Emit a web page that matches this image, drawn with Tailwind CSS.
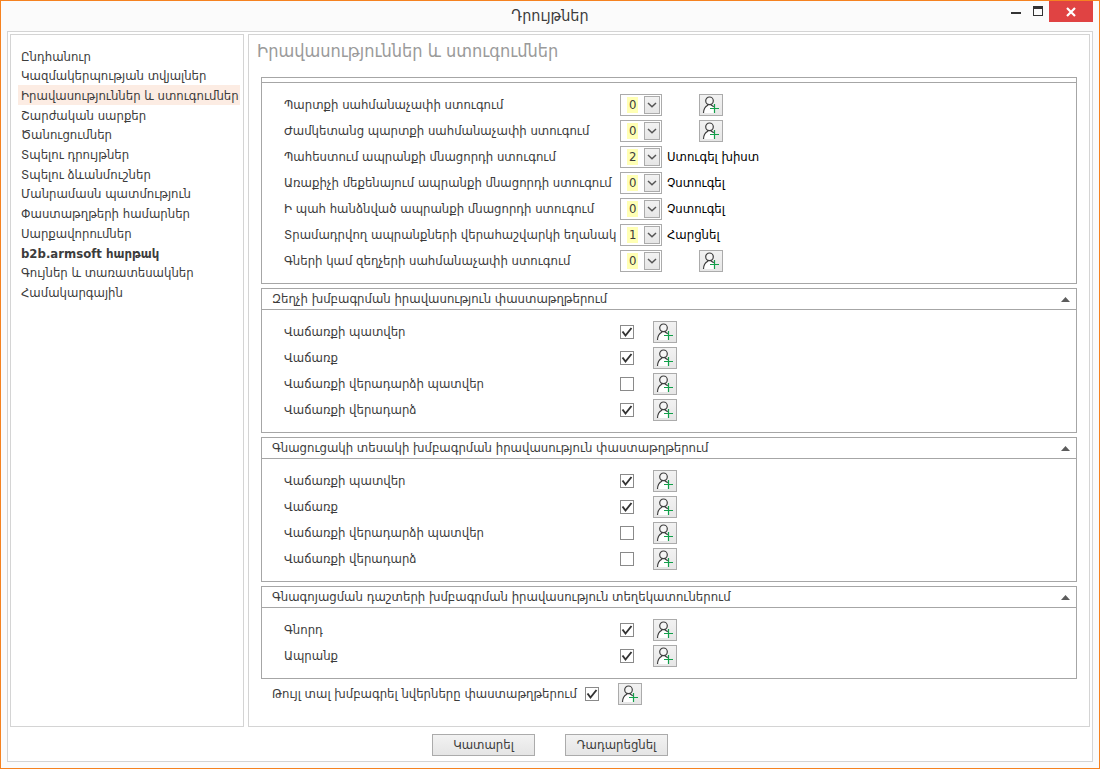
<!DOCTYPE html>
<html lang="hy">
<head>
<meta charset="utf-8">
<title>Դրույթներ</title>
<script src="https://cdn.jsdelivr.net/npm/@tailwindcss/browser@4"></script>
</head>
<body class="flex min-h-screen flex-col border border-[#f58220] bg-[#fbfbfb] px-1.5 pb-1.5 font-['DejaVu_Sans_Condensed','DejaVu_Sans',sans-serif] text-[13px] text-[#3c3c3c]">
<svg class="hidden">
  <symbol id="user-add" viewBox="0 0 18 18">
    <path d="M2 17C2 13 3.500 11 6 9.500L9.500 9.500 12 11V17z" fill="#fff"/>
    <g fill="#f6f6f6" stroke="#3f3f3f" stroke-width="1.200">
      <circle cx="7.500" cy="4.800" r="3.800"/>
      <path fill="none" d="M1.500 17C1.600 12.800 3 10.600 5.800 9.200L6 8.200M9 8.200L9.300 9.200C10.500 9.700 11.200 10.200 11.700 10.900"/>
    </g>
    <path d="M12.500 8v9M8 12.500h9" stroke="#12a04a" stroke-width="1.200" fill="none"/>
  </symbol>
</svg>
<header class="relative flex h-[30px] shrink-0 items-center justify-center">
  <h1 class="text-base">Դրույթներ</h1>
  <div class="absolute top-0 right-0 flex h-[21px]">
    <button aria-label="Minimize" class="flex w-[22px] justify-center pt-[11px]"><span class="h-0.5 w-2.5 bg-[#333]"></span></button>
    <button aria-label="Maximize" class="flex w-[22px] justify-center pt-[5px]"><span class="h-2.5 w-2.5 border border-t-3 border-[#333]"></span></button>
    <button aria-label="Close" class="flex w-11 items-center justify-center bg-[#e04343]">
      <svg class="size-2.5" viewBox="0 0 10 10"><path d="M1 1l8 8M9 1L1 9" stroke="#fff" stroke-width="2.200"/></svg>
    </button>
  </div>
</header>
<div class="flex grow flex-col border border-[#d4d4d4] bg-white px-0.5 pt-0.5">
  <div class="flex grow gap-1">
    <nav class="w-[234px] shrink-0 border border-[#d4d4d4] pt-[11px] pr-[3px] pl-[7px]">
      <ul id="menu" class="grid h-64 auto-rows-fr"></ul>
    </nav>
    <main class="grow border border-[#d4d4d4] px-3 pb-4">
      <h2 class="-ml-1 flex h-8 items-center text-lg text-[#9a9a9a]">Իրավասություններ և ստուգումներ</h2>
      <div id="groups" class="mt-2.5 space-y-1"></div>
      <div class="flex h-[30px] items-center pl-[11px]">
        <label for="gifts" class="whitespace-nowrap">Թույլ տալ խմբագրել նվերները փաստաթղթերում</label>
        <span class="relative ml-2 flex size-3.5">
          <input id="gifts" type="checkbox" checked class="peer size-3.5 appearance-none border border-[#8a8a8a] bg-white">
          <svg class="pointer-events-none absolute inset-0 hidden peer-checked:block" viewBox="0 0 14 14"><path d="M2.500 6.500l3 4 6-7.500" fill="none" stroke="#333" stroke-width="1.900"/></svg>
        </span>
        <button aria-label="Ավելացնել" class="ml-[19px] flex h-[22px] w-6 items-center justify-center border border-[#ababab] bg-linear-to-b from-[#f2f2f2] to-[#e6e6e6]"><svg class="size-[18px]"><use href="#user-add"/></svg></button>
      </div>
    </main>
  </div>
  <footer class="flex h-[34px] items-center justify-center gap-[30px] pt-0.5">
    <button class="h-[22px] w-[103px] border border-[#ababab] bg-linear-to-b from-[#f2f2f2] to-[#e5e5e5]">Կատարել</button>
    <button class="h-[22px] w-[103px] border border-[#ababab] bg-linear-to-b from-[#f2f2f2] to-[#e5e5e5]">Դադարեցնել</button>
  </footer>
</div>
<script>
const menu = ['Ընդհանուր','Կազմակերպության տվյալներ','Իրավասություններ և ստուգումներ','Շարժական սարքեր','Ծանուցումներ','Տպելու դրույթներ','Տպելու ձևանմուշներ','Մանրամասն պատմություն','Փաստաթղթերի համարներ','Սարքավորումներ','b2b.armsoft հարթակ','Գույներ և տառատեսակներ','Համակարգային'];
document.getElementById('menu').innerHTML = menu.map((t, i) =>
  `<li class="flex min-h-0 items-center"><a href="#" class="flex h-full w-full items-center whitespace-nowrap pt-px pl-[3px] ${i === 2 ? 'bg-[#fcece3]' : ''} ${i === 10 ? 'font-bold' : ''}">${t}</a></li>`).join('');

const addButton = `<button aria-label="Ավելացնել" class="flex h-[22px] w-6 items-center justify-center border border-[#ababab] bg-linear-to-b from-[#f2f2f2] to-[#e6e6e6]"><svg class="size-[18px]"><use href="#user-add"/></svg></button>`;
let n = 0;
const selectRow = ([label, value, note]) => { const id = 'f' + n++; return `
  <div class="flex h-[26px] items-center">
    <label for="${id}" class="w-[336px] shrink-0 whitespace-nowrap">${label}</label>
    <span class="relative flex h-[22px] w-[42px] shrink-0 border border-[#ababab] bg-white">
      <select id="${id}" class="h-full w-full appearance-none bg-[linear-gradient(#ffffb4,#ffffb4)] bg-[length:11px_16px] bg-[position:6px_2px] bg-no-repeat pl-2 leading-5"><option>${value}</option></select>
      <span class="pointer-events-none absolute top-px right-px flex h-[18px] w-4 items-center justify-center border border-[#ababab] bg-linear-to-b from-[#f2f2f2] to-[#e6e6e6]">
        <svg class="h-1.5 w-2.5" viewBox="0 0 10 6"><path d="M1 1l4 3.700L9 1" fill="none" stroke="#555" stroke-width="1.500"/></svg>
      </span>
    </span>
    ${note ? `<span class="pl-[5px] text-black">${note}</span>` : `<span class="flex pl-[37px]">${addButton}</span>`}
  </div>`; };
const checkRow = ([label, on]) => { const id = 'f' + n++; return `
  <div class="flex h-[26px] items-center">
    <label for="${id}" class="w-[336px] shrink-0 whitespace-nowrap">${label}</label>
    <span class="relative mr-[19px] flex size-3.5">
      <input id="${id}" type="checkbox" ${on ? 'checked' : ''} class="peer size-3.5 appearance-none border border-[#8a8a8a] bg-white">
      <svg class="pointer-events-none absolute inset-0 hidden peer-checked:block" viewBox="0 0 14 14"><path d="M2.500 6.500l3 4 6-7.500" fill="none" stroke="#333" stroke-width="1.900"/></svg>
    </span>
    ${addButton}
  </div>`; };
const group = (title, rows) => `
  <section class="border border-[#a6a6a6]">
    ${title ? `<button class="flex h-[21px] w-full items-center justify-between border-b border-[#a6a6a6] pr-1.5 pl-2.5"><span>${title}</span><svg class="h-[5px] w-[9px]" viewBox="0 0 9 5"><path d="M4.500 0L9 5H0z" fill="#5c5c5c"/></svg></button>` : `<div class="h-[5px] border-b border-[#a6a6a6]"></div>`}
    <div class="py-[9px] pl-[22px]">${rows}</div>
  </section>`;
const docs = last => [['Վաճառքի պատվեր',1],['Վաճառք',1],['Վաճառքի վերադարձի պատվեր',0],['Վաճառքի վերադարձ',last]].map(checkRow).join('');
document.getElementById('groups').innerHTML =
  group('', [
    ['Պարտքի սահմանաչափի ստուգում',0],
    ['Ժամկետանց պարտքի սահմանաչափի ստուգում',0],
    ['Պահեստում ապրանքի մնացորդի ստուգում',2,'Ստուգել խիստ'],
    ['Առաքիչի մեքենայում ապրանքի մնացորդի ստուգում',0,'Չստուգել'],
    ['Ի պահ հանձնված ապրանքի մնացորդի ստուգում',0,'Չստուգել'],
    ['Տրամադրվող ապրանքների վերահաշվարկի եղանակ',1,'Հարցնել'],
    ['Գների կամ զեղչերի սահմանաչափի ստուգում',0]
  ].map(selectRow).join('')) +
  group('Զեղչի խմբագրման իրավասություն փաստաթղթերում', docs(1)) +
  group('Գնացուցակի տեսակի խմբագրման իրավասություն փաստաթղթերում', docs(0)) +
  group('Գնագոյացման դաշտերի խմբագրման իրավասություն տեղեկատուներում', [['Գնորդ',1],['Ապրանք',1]].map(checkRow).join(''));
</script>
</body>
</html>
